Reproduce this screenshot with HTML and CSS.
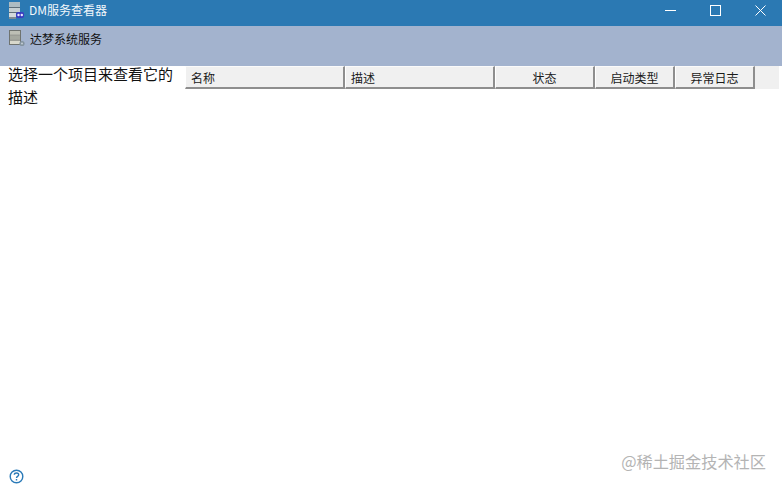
FILE: index.html
```html
<!DOCTYPE html>
<html lang="zh">
<head>
<meta charset="utf-8">
<title>DM服务查看器</title>
<link rel="stylesheet" href="styles.css">
</head>
<body>
<div class="window">
  <header class="titlebar">
    <div class="title-left">
      <svg class="app-icon" width="16" height="18" viewBox="0 0 16 18">
        <rect x="0" y="0" width="11" height="5" fill="#aebcc2"/>
        <rect x="0" y="5" width="11" height="1" fill="#5f6e78"/>
        <rect x="0" y="6" width="11" height="4" fill="#c6cfd2"/>
        <rect x="0" y="10" width="11" height="1" fill="#5f6e78"/>
        <rect x="0" y="11" width="7" height="4" fill="#d4dadb"/>
        <rect x="0" y="15" width="7" height="2" fill="#7d8a92"/>
        <rect x="7" y="10" width="8" height="6" rx="2" fill="#3b3cc0"/>
        <circle cx="9.5" cy="13" r="1.2" fill="#e8e8ff"/>
        <circle cx="12.8" cy="13" r="1.2" fill="#e8e8ff"/>
      </svg>
      <span class="title-text">DM服务查看器</span>
    </div>
    <div class="win-controls">
      <svg class="ctl ctl-min" width="11" height="11" viewBox="0 0 11 11"><path d="M0 5.5H11" stroke="#fff" fill="none"/></svg>
      <svg class="ctl ctl-max" width="11" height="11" viewBox="0 0 11 11"><rect x=".5" y=".5" width="10" height="10" stroke="#fff" fill="none"/></svg>
      <svg class="ctl ctl-close" width="11" height="11" viewBox="0 0 11 11"><path d="M.5 .5L10.5 10.5M10.5 .5L.5 10.5" stroke="#fff" fill="none"/></svg>
    </div>
  </header>
  <div class="banner">
    <svg class="banner-icon" width="16" height="17" viewBox="0 0 16 17">
      <rect x=".5" y=".5" width="11" height="14" fill="#d8d8cc" stroke="#6f7370"/>
      <path d="M1 5H11M1 10H11" stroke="#5f6360"/>
      <rect x="1" y="6" width="10" height="3.5" fill="#a5a89f"/>
      <rect x="1" y="1" width="10" height="3.5" fill="#bdbfb5"/>
      <circle cx="13" cy="13.5" r="2.6" fill="#8494a0"/>
      <circle cx="13" cy="13.5" r="1" fill="#c5ced6"/>
    </svg>
    <span class="banner-text">达梦系统服务</span>
  </div>
  <main class="content">
    <p class="desc">选择一个项目来查看它的描述</p>
    <div class="table-head">
      <div class="col col-name">名称</div>
      <div class="col col-desc">描述</div>
      <div class="col col-status">状态</div>
      <div class="col col-start">启动类型</div>
      <div class="col col-log">异常日志</div>
      <div class="col-rest"></div>
    </div>
  </main>
  <footer class="footer">
    <svg class="help" width="15" height="15" viewBox="0 0 15 15">
      <circle cx="7.5" cy="7.5" r="6.3" fill="#fff" stroke="#2a7ab8" stroke-width="1.4"/>
      <path d="M5.3 5.8C5.5 3.4 9.7 3.4 9.7 5.8C9.7 7.4 7.5 7.3 7.5 9" stroke="#2a7ab8" stroke-width="1.4" fill="none"/>
      <rect x="6.8" y="10" width="1.4" height="1.5" fill="#2a7ab8"/>
    </svg>
  </footer>
  <span class="watermark">@稀土掘金技术社区</span>
</div>
</body>
</html>
```
FILE: styles.css
```css
* { box-sizing: border-box; }
html, body { margin: 0; padding: 0; }
body {
  width: 782px;
  height: 486px;
  overflow: hidden;
  background: #fff;
  font-family: "Noto Sans CJK SC", "Liberation Sans", sans-serif;
  color: #111;
}
.window {
  position: relative;
  width: 782px;
  height: 486px;
  display: flex;
  flex-direction: column;
}
.titlebar {
  height: 26px;
  flex: none;
  background: #2b79b3;
  display: flex;
  align-items: flex-start;
  justify-content: space-between;
}
.title-left { display: flex; align-items: flex-start; }
.app-icon { margin: 2px 0 0 9px; }
.title-text {
  margin-left: 4px;
  font-size: 12px;
  line-height: 20px;
  color: #f2f7fb;
}
.win-controls { display: flex; align-items: center; margin-top: 5px; }
.ctl { display: block; }
.ctl-min { margin-right: 34px; }
.ctl-max { margin-right: 34px; }
.ctl-close { margin-right: 16px; }
.banner {
  height: 40px;
  flex: none;
  background: #a3b3ce;
  display: flex;
  align-items: flex-start;
  padding: 4px 0 0 9px;
}
.banner-text {
  margin-left: 5px;
  font-size: 12px;
  line-height: 18px;
  color: #111;
}
.content {
  flex: 1;
  display: flex;
  align-items: flex-start;
}
.desc {
  position: relative;
  width: 185px;
  margin: -4px 0 0 0;
  flex: none;
  padding: 0 8px;
  font-size: 15px;
  line-height: 23px;
}
.table-head {
  display: flex;
  height: 24px;
  flex: 1;
  padding-right: 3px;
}
.col {
  height: 23px;
  background: #f0f0f0;
  border-right: 2px solid #8e8e8e;
  border-bottom: 2px solid #8e8e8e;
  border-left: 1px solid #fff;
  border-top: 1px solid #fafafa;
  font-size: 12px;
  line-height: 21px;
  color: #1a1a1a;
}
.col-name { width: 160px; padding-left: 5px; }
.col-desc { width: 150px; padding-left: 5px; }
.col-status { width: 100px; text-align: center; }
.col-start { width: 80px; text-align: center; }
.col-log { width: 80px; text-align: center; }
.col-rest { flex: 1; height: 23px; background: #f0f0f0; }
.footer {
  height: 30px;
  flex: none;
  display: flex;
  align-items: flex-start;
}
.help { margin: 13px 0 0 9px; }
.watermark {
  position: absolute;
  right: 16px;
  top: 449px;
  font-size: 16.2px;
  line-height: 24px;
  color: #b4b4b4;
}
```
